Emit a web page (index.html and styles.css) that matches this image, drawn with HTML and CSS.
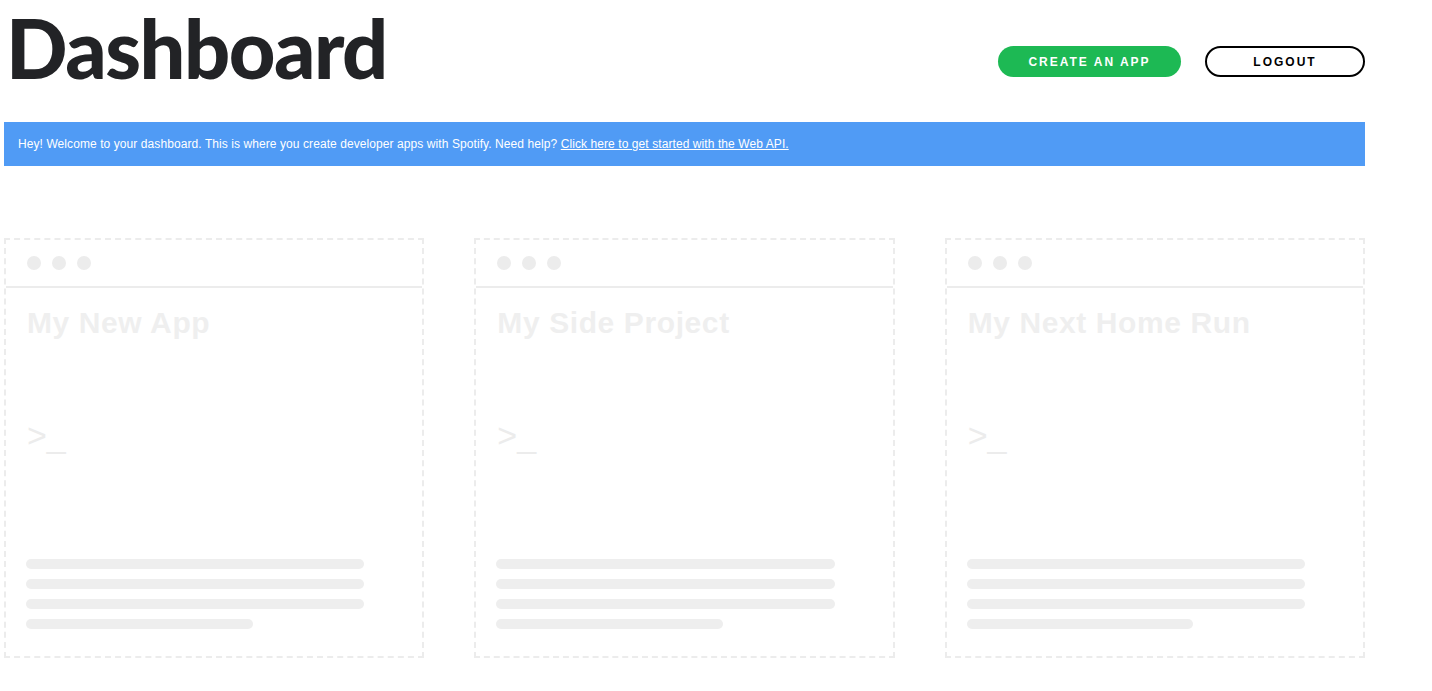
FILE: index.html
```html
<!DOCTYPE html>
<html>
<head>
<meta charset="utf-8">
<title>Dashboard</title>
<link rel="stylesheet" href="styles.css">
</head>
<body>
<div class="page">
  <header class="top">
    <h1 class="title">Dashboard</h1>
    <div class="actions">
      <button class="btn btn-green">CREATE AN APP</button>
      <button class="btn btn-outline">LOGOUT</button>
    </div>
  </header>
  <div class="banner">Hey! Welcome to your dashboard. This is where you create developer apps with Spotify. Need help? <a href="#">Click here to get started with the Web API.</a></div>
  <div class="cards">
    <div class="card">
      <div class="card-head"><span class="dot"></span><span class="dot"></span><span class="dot"></span></div>
      <div class="card-body">
        <div class="card-title">My New App</div>
        <div class="prompt">&gt;_</div>
        <div class="lines"><span class="line"></span><span class="line"></span><span class="line"></span><span class="line short"></span></div>
      </div>
    </div>
    <div class="card">
      <div class="card-head"><span class="dot"></span><span class="dot"></span><span class="dot"></span></div>
      <div class="card-body">
        <div class="card-title">My Side Project</div>
        <div class="prompt">&gt;_</div>
        <div class="lines"><span class="line"></span><span class="line"></span><span class="line"></span><span class="line short"></span></div>
      </div>
    </div>
    <div class="card">
      <div class="card-head"><span class="dot"></span><span class="dot"></span><span class="dot"></span></div>
      <div class="card-body">
        <div class="card-title">My Next Home Run</div>
        <div class="prompt">&gt;_</div>
        <div class="lines"><span class="line"></span><span class="line"></span><span class="line"></span><span class="line short"></span></div>
      </div>
    </div>
  </div>
</div>
</body>
</html>
```

FILE: styles.css
```css
* { box-sizing: border-box; }
html, body { margin: 0; padding: 0; background: #fff; }
body { font-family: "Liberation Sans", Arial, sans-serif; }
.page { width: 1365px; padding-left: 4px; }
.top { display: flex; justify-content: space-between; align-items: flex-start; height: 122px; }
.title {
  margin: 7px 0 0 2px;
  font-family: Lato, "Liberation Sans", sans-serif;
  font-size: 81px;
  line-height: 81px;
  font-weight: 900;
  letter-spacing: -1.5px;
  color: #222326;
}
.actions { display: flex; gap: 24px; margin-top: 46px; }
.btn {
  height: 31px;
  border-radius: 16px;
  font-family: "Liberation Sans", Arial, sans-serif;
  font-weight: 700;
  font-size: 12px;
  letter-spacing: 2px;
  cursor: pointer;
}
.btn-green { width: 183px; background: #1db954; color: #fff; border: none; }
.btn-outline { width: 160px; background: #fff; color: #000; border: 2px solid #000; }
.banner {
  height: 44px;
  background: #509bf5;
  color: #fff;
  font-size: 12px;
  letter-spacing: 0.08px;
  padding-left: 14px;
  display: flex;
  align-items: center;
  white-space: pre;
}
.banner a { color: #fff; text-decoration: underline; }
.cards {
  display: grid;
  grid-template-columns: repeat(3, 1fr);
  gap: 50px;
  margin-top: 72px;
}
.card {
  height: 420px;
  border: 2px dashed #ececec;
  display: flex;
  flex-direction: column;
}
.card-head {
  height: 48px;
  border-bottom: 2px solid #ececec;
  display: flex;
  align-items: center;
  gap: 11px;
  padding-left: 21px;
}
.dot { width: 14px; height: 14px; border-radius: 50%; background: #ececec; }
.card-body {
  flex: 1;
  display: flex;
  flex-direction: column;
  padding: 17px 58px 27px 20px;
}
.card-title {
  font-size: 30px;
  line-height: 36px;
  font-weight: 700;
  letter-spacing: 0.6px;
  color: #efefef;
  padding-left: 1px;
}
.prompt {
  margin-top: 74px;
  font-size: 34px;
  line-height: 40px;
  color: #ececec;
  font-weight: 400;
  padding-left: 1px;
}
.lines { margin-top: auto; display: flex; flex-direction: column; gap: 10px; }
.line { display: block; height: 10px; border-radius: 5px; background: #eeeeee; }
.line.short { width: 67%; }
```
